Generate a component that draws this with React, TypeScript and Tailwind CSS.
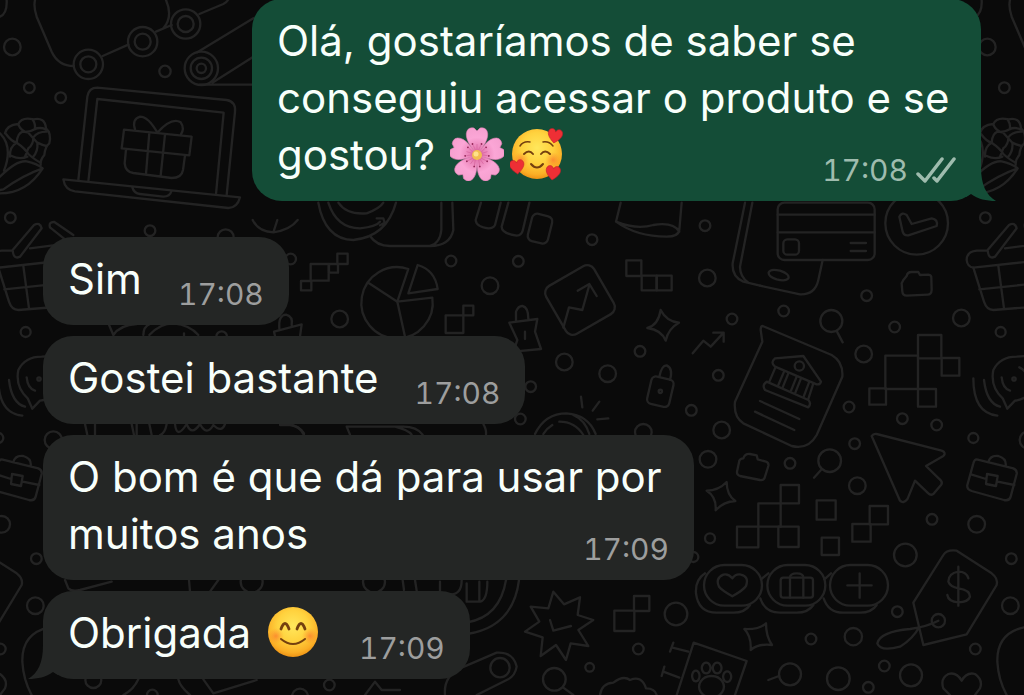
import type { ReactNode } from "react";

type Message = {
    id: number;
    content: ReactNode;
    time: string;
    sent?: boolean;
    tail?: boolean;
};

type Region = {
    x: number;
    y: number;
    paths: string[];
    circles: number[][];
    rects?: number[][];
};

// Doodles are drawn at 3x, each region is placed by its top left corner.
// circles: [cx, cy, r], rects: [x, y, width, height, rx, rotation]
const REGIONS: Region[] = [
    {
        x: 0,
        y: 0,
        circles: [
            [37, 141, 25], [88, 263, 16], [182, 293, 16], [495, 214, 17], [31, 653, 16], [450, 692, 16], [677, 712, 24],
            [265, 193, 44], [265, 193, 24], [428, 125, 44], [428, 125, 24], [557, 72, 44], [557, 72, 24],
            [604, 205, 50], [604, 205, 32], [604, 205, 14],
        ],
        paths: [
            "M105 0Q100 20 110 50L155 155Q175 198 222 198M498 0Q520 50 490 85M308 168L385 134M468 95L515 75M598 42L670 12Q680 7 684 0",
            "M592 157L760 55M637 248L760 170M600 254H760M20 0Q22 40 0 50",
            "M235 540L262 290Q266 263 292 263L680 300Q708 305 705 335L680 585M265 545L292 297L671 338L648 582",
            "M190 538L720 592Q712 624 685 624L225 574Q195 570 190 538zM397 562Q402 580 420 582L490 590Q510 590 514 574",
            "M372 389L575 410L568 466L365 445zM448 398L438 522M495 403L482 527M378 448L374 490Q376 515 400 519L515 534Q545 534 549 510L555 466",
            "M472 398Q445 350 420 350Q395 358 405 388M472 398Q515 350 542 367Q555 385 542 405",
            "M15 400Q20 375 55 372Q65 350 100 358Q135 350 138 385Q155 400 148 430Q135 440 133 465Q120 480 122 495",
            "M18 402Q35 425 50 428Q75 445 85 462Q105 480 122 488M55 374Q65 395 85 398Q100 415 112 428Q128 436 140 438M98 358Q108 375 104 388M50 428Q52 400 68 395Q88 398 104 388Q118 380 138 388M30 470Q28 440 50 428M82 470Q60 480 35 468M85 445Q100 435 100 412Q112 395 140 395M85 445L75 470M112 428Q115 455 98 472",
            "M0 530Q50 480 80 484Q110 490 128 505Q80 580 0 580M128 505Q70 525 10 568L0 570M0 400Q40 440 12 512",
        ],
    },
    {
        x: 0,
        y: 220,
        circles: [[665, 350, 16], [160, 660, 26]],
        paths: [
            "M325 310L340 345Q360 315 410 312M430 345Q430 320 450 312M448 345Q480 310 520 310Q570 315 595 345M552 340V348",
            "M838 325Q835 285 858 284Q880 290 875 315M825 348L822 335L905 313L900 350",
            "M255 612L262 645M285 612V645M395 612L402 645M410 612V645M448 612L455 645M500 612Q495 640 480 645M525 612Q530 660 560 612Q575 650 600 612Q620 650 640 615Q665 640 675 612",
            "M860 612Q900 615 912 645M758 0Q775 35 820 37Q870 30 893 0M820 37L832 0",
        ],
    },
    {
        x: 280,
        y: 200,
        circles: [[32, 177, 16], [179, 357, 25], [513, 183, 16], [715, 184, 16], [630, 257, 25], [853, 486, 25], [752, 560, 16], [721, 657, 16]],
        rects: [[92, 192, 54, 50], [63, 243, 31, 28], [172, 161, 31, 31], [147, 192, 27, 26], [497, 346, 53, 53], [550, 317, 30, 29]],
        paths: [
            "M115 8Q135 118 220 120Q320 110 348 8M145 8Q170 85 240 85Q290 80 300 65M175 8Q200 45 260 40Q300 25 310 8M290 55L310 55L314 68L300 76",
            "M270 108Q290 138 330 138H450Q480 130 484 90V8M517 8L520 90Q510 138 450 138",
            "M603 8L587 60Q588 80 625 85Q640 85 645 75L662 8M685 8L665 80Q665 100 710 107Q725 105 728 92L748 8",
            "M385 207A107 107 0 1 0 457 293L352 305zM352 305L265 248M352 305L375 410M413 195Q465 210 473 267L385 280z",
            "M688 368L772 357L765 395L783 447L700 455L712 420zM708 362V335Q715 317 728 318Q745 322 745 357M735 395V417",
            "M210 704L200 680H370Q410 680 428 704M345 680Q385 690 395 704M610 672Q620 690 618 704M0 675H30Q60 680 72 700",
        ],
    },
    {
        x: 520,
        y: 200,
        circles: [[216, 119, 16], [555, 77, 16], [562, 234, 25], [636, 357, 16], [360, 454, 16], [263, 521, 25], [595, 526, 16], [514, 631, 16], [605, 690, 25], [370, 697, 25], [421, 574, 5]],
        rects: [[29, 44, 62, 84, 16, 14], [97, 217, 166, 166, 24, -30], [319, 181, 45, 47], [365, 227, 45, 44], [410, 227, 45, 44], [387, 533, 68, 84, 14, 13]],
        paths: [
            "M130 383L147 322L187 330L208 255M173 272L208 252L230 288",
            "M422 330Q440 365 477 368Q445 385 437 422Q425 390 382 384Q415 375 422 330z",
            "M518 460L550 422L572 440L611 398M580 398H611V425",
            "M418 530Q425 495 440 496Q460 505 450 540",
            "M302 8L288 65Q350 110 440 110Q475 110 478 90L485 8M288 65Q350 90 400 75Q460 65 478 95",
            "M675 8L638 190Q635 230 670 245L720 257M697 8L660 200Q660 230 685 248",
            "M45 702Q75 640 140 640Q205 645 227 702M70 702Q80 685 97 675M118 665Q165 665 190 705M160 645Q195 660 208 702M183 590L187 622M238 605L218 632M232 658L265 655",
        ],
    },
    {
        x: 760,
        y: 200,
        circles: [[470, 70, 94], [320, 287, 16], [71, 333, 16], [404, 381, 16], [604, 354, 25], [722, 396, 15], [311, 462, 25], [267, 621, 16], [427, 656, 16], [530, 675, 16], [214, 363, 33], [118, 498, 14], [762, 537, 5]],
        rects: [[53, 8, 291, 172, 20], [70, 118, 47, 46, 12], [474, 405, 70, 70], [376, 467, 98, 100], [545, 474, 53, 53], [328, 565, 50, 49], [474, 567, 54, 53]],
        paths: [
            "M53 44H344M53 97H344M272 129H318M272 153H318M231 395L248 427",
            "M418 50Q425 35 440 45L455 72L515 55Q535 58 530 78L445 106Q432 108 428 95z",
            "M0 257L120 283Q165 285 175 240L188 180M26 218Q30 205 60 212Q90 222 85 235Q78 245 50 238Q25 230 26 218z",
            "M430 240L440 228Q442 216 455 216H475L480 225L505 224Q515 225 514 235L515 270Q514 284 503 284L440 287Q428 287 427 275L425 250z",
            "M8 378Q2 378 2 390L7 425L-75 605Q-80 650 -50 670L95 738Q145 750 170 705L247 530Q250 485 215 465z",
            "M45 475L130 468L183 545Q180 555 170 553L45 500Q30 488 45 475zM20 545L145 600Q155 610 145 622L15 570Q5 555 20 545z",
            "M45 505L28 545M72 515L55 555M85 520L68 562M110 530L93 572M123 535L106 578M148 545L131 590M160 550L145 597M0 603L118 657M-15 635L103 690",
            "M683 150L747 75Q765 65 770 85L705 170Q685 180 683 150zM682 152H650Q620 155 620 180Q622 200 640 203L850 180M735 145L850 130",
            "M640 203L672 305Q680 330 700 330L850 318M658 268L850 248M715 198L732 325M795 82Q790 65 808 66L865 105M795 82L840 118",
            "M850 472Q830 465 770 470Q720 470 700 510Q690 560 728 595L742 626L765 602Q790 600 810 580M640 535Q640 640 712 647M672 540Q680 610 720 620M725 532Q728 565 750 572M778 502Q795 510 800 525",
        ],
    },
    {
        x: 680,
        y: 430,
        circles: [
            [84, 88, 25], [330, 100, 16], [524, 41, 16], [532, 167, 25], [880, 24, 15], [756, 268, 16], [890, 283, 25], [994, 386, 16], [676, 375, 34],
            [90, 325, 15], [40, 381, 15], [991, 527, 25], [652, 545, 16], [886, 657, 16], [613, 708, 16], [693, 736, 33], [565, 772, 16], [475, 746, 34],
            [520, 620, 26], [393, 627, 16], [330, 733, 33], [449, 92, 34], [775, 572, 20],
        ],
        rects: [
            [302, 165, 55, 55], [235, 220, 67, 70], [171, 290, 64, 62], [295, 290, 61, 61], [410, 211, 57, 58], [425, 323, 52, 52], [569, 228, 55, 55], [517, 282, 55, 53],
            [72, 405, 174, 122, 61], [262, 405, 174, 122, 61], [450, 405, 174, 122, 61], [302, 443, 97, 60, 8],
        ],
        paths: [
            "M890 88L1000 115Q1012 120 1010 132L992 200Q988 214 972 210L875 183Q860 178 862 165L880 100Q883 88 890 88zM925 97Q930 75 955 78Q980 85 977 108M921 132L953 138L948 168L918 162zM873 133L918 147M953 155L1003 165",
            "M790 375Q800 358 830 362L935 430Q955 445 950 465L860 613L730 645L700 518zM775 572Q740 590 690 597Q600 605 592 640Q600 665 660 650Q700 625 718 590",
            "M865 445Q860 425 835 425Q805 430 805 455Q810 470 835 475Q870 480 870 500Q865 517 835 517Q805 515 802 495M835 410V527",
            "M1032 592Q950 610 952 695Q955 750 980 795M845 752Q830 725 805 732Q780 745 790 775L810 795M845 752Q860 725 885 732Q910 750 900 775L885 795",
            "M575 18Q580 10 590 12L785 62Q800 68 790 78L738 108L783 152Q788 158 783 165L760 192Q752 197 745 190L705 152L682 208Q670 222 660 212z",
            "M190 85Q195 70 210 72L230 76L233 88L258 95Q267 98 265 108L255 140Q252 152 240 150L180 138Q170 135 171 125L178 92Q180 86 190 85zM423 120L402 143",
            "M140 156Q140 195 166 213Q130 215 107 241Q110 200 80 182Q115 182 140 156zM258 580Q258 620 276 645Q235 640 212 660Q215 620 193 597Q235 600 258 580z",
            "M75 430Q45 450 48 490Q55 548 110 548H160Q195 548 210 525M265 430L243 448M241 505Q255 548 300 548H350Q385 548 400 525M453 430L433 448M431 505Q445 548 490 548H540Q575 548 590 525",
            "M157 445Q145 430 130 434Q105 445 117 470Q125 480 157 499Q190 480 198 468Q208 440 183 434Q168 430 157 445zM330 503V443Q330 430 350 430Q370 430 370 443V503M502 466H575M539 430V503",
            "M-10 795L41 638L200 693L165 795M47 722a11 16 0 1 0 1 0zM78 698a13 16 0 1 0 1 0zM111 698a13 16 0 1 0 1 0zM141 724a12 16 0 1 0 1 0zM94 738a37 32 0 1 0 1 0zM297 738L265 750",
        ],
    },
    {
        x: 400,
        y: 560,
        circles: [[828, 162, 34], [715, 267, 16], [569, 322, 13], [463, 358, 34], [300, 323, 29]],
        rects: [[643, 152, 60, 61], [702, 108, 46, 45]],
        paths: [
            "M8 60L12 90M45 60L50 92M318 60Q300 170 202 187M357 60Q340 200 202 222M120 65V95M150 103Q185 105 185 60M200 70V125H240Q262 120 262 65M238 65V125",
            "M460 95L492 133L540 112L533 165L580 180L535 210L565 258L512 250L498 300L468 255L422 288L428 232L375 215L418 185L392 140L445 145zM450 180L460 212L513 198",
            "M490 383L520 405M135 405Q130 350 180 325L290 278Q340 275 350 320Q345 350 320 360L230 405",
            "M600 405Q605 370 640 368Q670 345 690 360Q725 345 738 385Q765 385 770 405M820 248L810 275M815 262L865 275M793 320L785 348M790 335L838 353",
        ],
    },
    {
        x: 0,
        y: 430,
        circles: [[755, 455, 33], [1122, 455, 33], [280, 750, 24], [457, 795, 16], [988, 765, 16], [900, 800, 24]],
        paths: [
            "M195 450L205 475Q215 485 240 480L335 455M567 450L570 485M630 485L655 450M415 748Q400 780 370 795M535 748Q540 770 570 795M610 748L640 790L770 750M1095 795L1125 755L1145 780H1200",
        ],
    },
];

const Wallpaper = () => (
    <svg
        viewBox="0 0 1024 695"
        preserveAspectRatio="xMidYMin slice"
        className="absolute inset-0 -z-10 size-full"
        fill="none"
        stroke="#232323"
        strokeWidth="7"
        strokeLinecap="round"
        strokeLinejoin="round"
        aria-hidden="true"
    >
        <defs>
            <g id="doodles">
                {REGIONS.map((region, i) => (
                    <g key={i} transform={`translate(${region.x} ${region.y}) scale(${1 / 3})`}>
                        {region.paths.map((d) => <path key={d} d={d} />)}
                        {region.circles.map(([cx, cy, r], j) => <circle key={j} cx={cx} cy={cy} r={r} />)}
                        {region.rects?.map(([x, y, w, h, rx = 0, angle = 0], j) => (
                            <rect
                                key={j}
                                x={x}
                                y={y}
                                width={w}
                                height={h}
                                rx={rx}
                                transform={`rotate(${angle} ${x + w / 2} ${y + h / 2})`}
                            />
                        ))}
                    </g>
                ))}
            </g>
        </defs>
        <use href="#doodles" x="-975" />
        <use href="#doodles" />
        <use href="#doodles" x="975" />
    </svg>
);

const emojiClass = "mx-[3px] inline-block size-[54px] align-[-11px]";

const Flower = () => (
    <svg viewBox="0 0 54 54" className={emojiClass} role="img" aria-label="🌸">
        <defs>
            <radialGradient id="petal" gradientUnits="userSpaceOnUse" cx="27" cy="28" r="27">
                <stop offset="0" stopColor="#c9447f" />
                <stop offset=".25" stopColor="#e77fb4" />
                <stop offset=".65" stopColor="#fba6d6" />
                <stop offset="1" stopColor="#f6a0d0" />
            </radialGradient>
        </defs>
        {[0, 72, 144, 216, 288].map((angle) => (
            <g key={angle} transform={`rotate(${angle} 27 28)`}>
                <path
                    d="M27 28C21 20 14 11 17 4Q19 0 24 1L27 4L30 1Q35 0 37 4C40 11 33 20 27 28z"
                    fill="url(#petal)"
                    stroke="#e583b9"
                    strokeWidth=".6"
                />
                <path d="M27 26V17M27 26L23 18M27 26L31 18" stroke="#d766a0" strokeWidth=".7" />
                <circle cx="22.5" cy="17" r=".9" fill="#942658" />
                <circle cx="31.5" cy="17" r=".9" fill="#942658" />
            </g>
        ))}
        <circle cx="27" cy="28" r="5" fill="#f2bd52" />
        <circle cx="26" cy="27" r="2.5" fill="#ffe28a" />
    </svg>
);

const FaceFill = ({ id }: { id: string }) => (
    <defs>
        <radialGradient id={id} cx=".5" cy=".38" r=".62">
            <stop offset="0" stopColor="#ffe75c" />
            <stop offset=".5" stopColor="#ffd23e" />
            <stop offset=".85" stopColor="#fbaf26" />
            <stop offset="1" stopColor="#ee9315" />
        </radialGradient>
        <radialGradient id={`${id}-blush`}>
            <stop offset="0" stopColor="#fb6a2c" stopOpacity=".6" />
            <stop offset="1" stopColor="#fb8a2c" stopOpacity="0" />
        </radialGradient>
    </defs>
);

const HEARTS = ["translate(45 9) rotate(10)", "translate(7 40) rotate(-6)", "translate(43 46) rotate(8)"];

const HeartsFace = () => (
    <svg viewBox="0 0 54 54" className={emojiClass} role="img" aria-label="🥰">
        <FaceFill id="hearts-face" />
        <circle cx="27" cy="27" r="25" fill="url(#hearts-face)" />
        <circle cx="11" cy="33" r="8" fill="url(#hearts-face-blush)" />
        <circle cx="43" cy="33" r="8" fill="url(#hearts-face-blush)" />
        <g fill="none" stroke="#74400f" strokeLinecap="round">
            <path d="M10 19Q13 14 20 15M33 15Q39 14 43 19" strokeWidth="1.5" />
            <path d="M14 27Q19 22 23 27M31 27Q35 22 40 27" strokeWidth="2" />
            <path d="M21 37Q27 44 33 37" strokeWidth="2" />
        </g>
        {HEARTS.map((transform) => (
            <path
                key={transform}
                transform={transform}
                d="M0 7C-4 4-8 0-7-4C-6-8-1-8 0-4C1-8 6-8 7-4C8 0 4 4 0 7z"
                fill="#ee2f35"
                stroke="#c51e2a"
                strokeWidth=".6"
            />
        ))}
    </svg>
);

const SmileFace = () => (
    <svg viewBox="0 0 54 54" className={emojiClass} role="img" aria-label="😊">
        <FaceFill id="smile-face" />
        <circle cx="27" cy="27" r="25" fill="url(#smile-face)" />
        <circle cx="10" cy="31" r="8" fill="url(#smile-face-blush)" />
        <circle cx="44" cy="31" r="8" fill="url(#smile-face-blush)" />
        <g fill="none" stroke="#74400f" strokeLinecap="round">
            <path d="M15 24Q19 13 23 24M31 24Q35 13 39 24" strokeWidth="2.8" />
            <path d="M15 34Q27 44 39 34" strokeWidth="2" />
        </g>
    </svg>
);

const DoubleCheck = () => (
    <svg
        viewBox="0 0 40 28"
        className="h-7 w-10"
        fill="none"
        stroke="currentColor"
        strokeWidth="3.5"
        strokeLinecap="round"
        strokeLinejoin="round"
        role="img"
        aria-label="Entregue"
    >
        <path d="M2 18L9 25L26 3M18 22L21 25L38 3" />
    </svg>
);

const MESSAGES: Message[] = [
    {
        id: 1,
        content: <>Olá, gostaríamos de saber se conseguiu acessar o produto e se gostou? <Flower /><HeartsFace /></>,
        time: "17:08",
        sent: true,
        tail: true,
    },
    { id: 2, content: "Sim", time: "17:08" },
    { id: 3, content: "Gostei bastante", time: "17:08" },
    { id: 4, content: "O bom é que dá para usar por muitos anos", time: "17:09" },
    { id: 5, content: <>Obrigada <SmileFace /></>, time: "17:09", tail: true },
];

const Bubble = ({ content, time, sent, tail }: Message) => (
    <li
        className={`relative flow-root rounded-[30px] px-[25px] pt-[13px] pb-[18px] text-[42px] leading-[57px] text-[#f8fffb] ${
            sent ? "mb-[25px] max-w-[729px] self-end bg-[#144d37]" : "max-w-[651px] self-start bg-[#242625]"
        }`}
    >
        {content}
        <span
            className={`float-right mt-[31px] ml-9 flex h-[26px] items-center gap-2 text-[30px] leading-[26px] tabular-nums ${
                sent ? "text-[#9fbcae]" : "text-[#9d9e9e]"
            }`}
        >
            <time>{time}</time>
            {sent && <DoubleCheck />}
        </span>
        {tail && (
            <svg
                viewBox="0 0 30 44"
                className={`absolute bottom-0 h-11 w-[30px] ${
                    sent ? "-right-[15px] text-[#144d37]" : "-left-[15px] -scale-x-100 text-[#242625]"
                }`}
                fill="currentColor"
                aria-hidden="true"
            >
                <path d="M0 0H15V10C15 28 20 38 30 44C20 44 12 42 5 37L0 40z" />
            </svg>
        )}
    </li>
);

const App = () => {
    return (
        <main className="relative isolate min-h-screen overflow-hidden bg-[#0a0a0a] font-['Inter','Liberation_Sans',sans-serif]">
            <Wallpaper />
            <ul className="-mt-px flex flex-col gap-[11px] px-[43px] pb-4">
                {MESSAGES.map((message) => <Bubble key={message.id} {...message} />)}
            </ul>
        </main>
    );
};

export default App;
